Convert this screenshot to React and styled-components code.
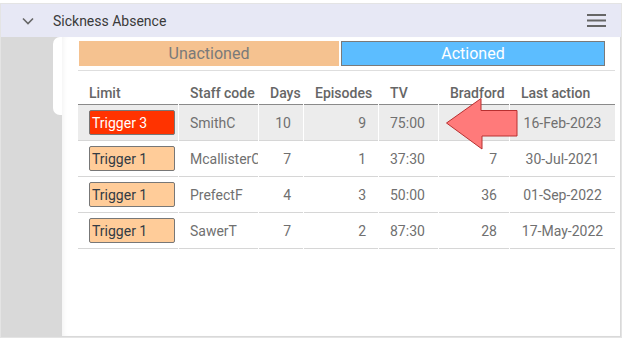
import React from "react";
import styled, { createGlobalStyle } from "styled-components";

const Global = createGlobalStyle`
  html, body { margin: 0; padding: 0; background: #ffffff; }
  body { font-family: Roboto, "Noto Sans", Arial, sans-serif; }
  * { box-sizing: border-box; }
`;

const Frame = styled.div`
  margin-top: 3px;
  width: 622px;
  height: 335px;
  border: 1px solid #e4e4e4;
  display: flex;
  flex-direction: column;
`;

const Header = styled.div`
  height: 33px;
  background: #e7e8f5;
  display: flex;
  align-items: center;
  padding-left: 21px;
  padding-right: 15px;
  flex-shrink: 0;
`;

const Title = styled.span`
  margin-left: 19px;
  font-size: 14px;
  color: #3a3a3a;
  flex: 1;
`;

const Body = styled.div`
  flex: 1;
  background: #d9d9d9;
  display: flex;
  align-items: flex-start;
  min-height: 0;
`;

const Gutter = styled.div`
  width: 52px;
  flex-shrink: 0;
`;

const Stub = styled.div`
  width: 9px;
  height: 78px;
  background: #ffffff;
  border-radius: 7px 0 0 7px;
  flex-shrink: 0;
`;

const Panel = styled.div`
  position: relative;
  flex: 1;
  min-width: 0;
  align-self: stretch;
  background: #ffffff;
  margin: 0 1px 1px 0;
  padding: 4px 5px 0 16px;
  box-shadow: inset 4px 0 6px -4px rgba(0, 0, 0, 0.08);
`;

const Tabs = styled.div`
  display: flex;
  gap: 2px;
  margin: 0 10px 0 1px;
  padding-bottom: 4px;
`;

const TabLine = styled.div`
  height: 1px;
  background: #dedede;
`;

const Tab = styled.div`
  height: 25px;
  flex: ${(p) => p.$grow};
  display: flex;
  align-items: center;
  justify-content: center;
  font-size: 16px;
  background: ${(p) => (p.$active ? "#5cbdff" : "#f5c290")};
  color: ${(p) => (p.$active ? "#ffffff" : "#7a7a7a")};
  border: 1px solid ${(p) => (p.$active ? "#7a7a7a" : "#f5c290")};
`;

const Table = styled.table`
  width: 539px;
  border-collapse: separate;
  border-spacing: 1px 0;
  margin-left: -1px;
  table-layout: fixed;
  font-size: 14px;
`;

const Th = styled.th`
  height: 34px;
  vertical-align: bottom;
  padding: 0 0 3px 11px;
  text-align: left;
  font-weight: 500;
  color: #666666;
  border-bottom: 1px solid #8a8a8a;
  white-space: nowrap;
  overflow: hidden;
`;

const Tr = styled.tr`
  background: ${(p) => (p.$hl ? "#ececec" : "#ffffff")};
`;

const Td = styled.td`
  height: 36px;
  border-bottom: 1px solid #d6d6d6;
  color: #707070;
  white-space: nowrap;
  overflow: hidden;
  text-align: ${(p) => p.$align || "left"};
  padding: ${(p) =>
    p.$align === "right" ? "0 12px 0 0" : p.$align === "center" ? "0" : "0 0 0 11px"};
`;

const Badge = styled.div`
  width: 86px;
  height: 25px;
  border: 1px solid #777777;
  border-radius: 2px;
  display: flex;
  align-items: center;
  padding-left: 2px;
  font-size: 14px;
  background: ${(p) => (p.$level === 3 ? "#ff3300" : "#ffcc99")};
  color: ${(p) => (p.$level === 3 ? "#ffffff" : "#333b44")};
`;

const Arrow = styled.svg`
  position: absolute;
  left: 383px;
  top: 60px;
`;

const cols = [100, 79, 44, 74, 59, 70, 105];
const rows = [
  { level: 3, code: "SmithC", days: 10, ep: 9, tv: "75:00", brad: "", last: "16-Feb-2023" },
  { level: 1, code: "McallisterC", days: 7, ep: 1, tv: "37:30", brad: 7, last: "30-Jul-2021" },
  { level: 1, code: "PrefectF", days: 4, ep: 3, tv: "50:00", brad: 36, last: "01-Sep-2022" },
  { level: 1, code: "SawerT", days: 7, ep: 2, tv: "87:30", brad: 28, last: "17-May-2022" },
];

export default function App() {
  return (
    <>
      <Global />
      <Frame>
        <Header>
          <svg width="12" height="8" viewBox="0 0 12 8">
            <polyline points="1,1.5 6,6.5 11,1.5" fill="none" stroke="#666" strokeWidth="1.6" />
          </svg>
          <Title>Sickness Absence</Title>
          <svg width="19" height="13" viewBox="0 0 19 13">
            <rect x="0" y="0" width="19" height="2" fill="#666" />
            <rect x="0" y="5.5" width="19" height="2" fill="#666" />
            <rect x="0" y="11" width="19" height="2" fill="#666" />
          </svg>
        </Header>
        <Body>
          <Gutter />
          <Stub />
          <Panel>
            <Tabs>
              <Tab $grow="260">Unactioned</Tab>
              <Tab $grow="264" $active>Actioned</Tab>
            </Tabs>
            <TabLine />
            <Table>
              <colgroup>
                {cols.map((w, i) => (
                  <col key={i} style={{ width: w }} />
                ))}
              </colgroup>
              <thead>
                <tr>
                  <Th>Limit</Th>
                  <Th>Staff code</Th>
                  <Th>Days</Th>
                  <Th>Episodes</Th>
                  <Th>TV</Th>
                  <Th>Bradford</Th>
                  <Th>Last action</Th>
                </tr>
              </thead>
              <tbody>
                {rows.map((r, i) => (
                  <Tr key={i} $hl={i === 0}>
                    <Td>
                      <Badge $level={r.level}>Trigger {r.level}</Badge>
                    </Td>
                    <Td>{r.code}</Td>
                    <Td $align="right">{r.days}</Td>
                    <Td $align="right">{r.ep}</Td>
                    <Td>{r.tv}</Td>
                    <Td $align="right">{r.brad}</Td>
                    <Td $align="center">{r.last}</Td>
                  </Tr>
                ))}
              </tbody>
            </Table>
            <Arrow width="74" height="54" viewBox="0 0 74 54">
              <polygon
                points="1.5,26 36,1.5 36,13.5 72,13.5 72,39 37,39 37,52"
                fill="#ff7a7a"
                stroke="#b83030"
                strokeWidth="1"
                strokeLinejoin="miter"
              />
            </Arrow>
          </Panel>
        </Body>
      </Frame>
    </>
  );
}
